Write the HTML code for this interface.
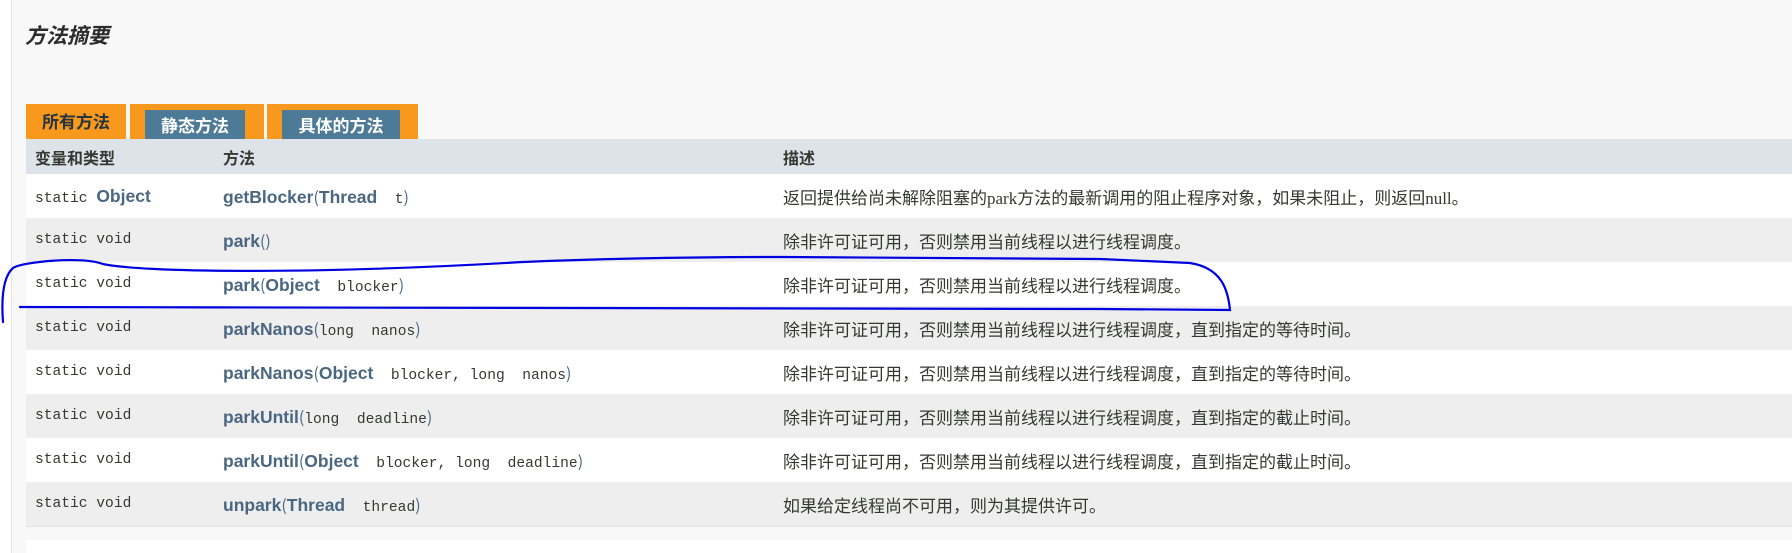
<!DOCTYPE html>
<html><head><meta charset="utf-8"><style>
body{margin:0;width:1792px;height:553px;background:#fff;overflow:hidden;position:relative;font-family:"Liberation Sans","Noto Sans CJK SC",sans-serif}
#pg{position:absolute;left:11px;top:0;width:1781px;height:553px;background:#f8f8f8;border-left:1px solid #e4e4e4}
h3{position:absolute;left:25px;top:20px;margin:0;font-size:21px;font-style:italic;font-weight:bold;color:#2c2c2c}
.tab{position:absolute;top:104px;height:35px;background:#f8981d}
.in{position:absolute;top:6px;height:29px;background:#4d7a97;color:#fff;font-weight:bold;font-size:17px;text-align:center;line-height:34px;overflow:hidden}
table{position:absolute;left:26px;top:139px;width:1766px;border-collapse:collapse}
td,th{padding:0;height:44px;vertical-align:middle;text-align:left}
th{height:35px;background:#dee3e9;font-size:16px;font-weight:bold;color:#353833}
tr td{background:#fff}
tr:nth-child(odd) td{background:#eeeeee}
.c1{padding-left:9px;width:188px;font-family:"Liberation Mono",monospace;font-size:14.6px;color:#353833}
.c2{width:560px}
.m{font-family:"Liberation Sans","Noto Sans CJK SC",sans-serif;font-weight:bold;font-size:17.5px;color:#4a6782}
.p{font-family:"Noto Sans CJK SC",sans-serif;color:#4a6782;font-size:16px;font-weight:normal}
.a{font-family:"Liberation Mono",monospace;font-size:14.6px;color:#353833;white-space:pre}
.c3{font-family:"Liberation Serif","Noto Sans CJK SC",sans-serif;font-size:17px;color:#353833}
</style></head><body>
<div id="pg"></div>
<h3>方法摘要</h3>
<div class="tab" style="left:26px;width:100px;font-weight:bold;font-size:17px;color:#253441;text-align:center;line-height:38px">所有方法</div>
<div class="tab" style="left:130px;width:134px"><div class="in" style="left:15px;width:100px">静态方法</div></div>
<div class="tab" style="left:267px;width:151px"><div class="in" style="left:15px;width:118px">具体的方法</div></div>
<table>
<tr><th style="padding-left:9px">变量和类型</th><th>方法</th><th>描述</th></tr>
<tr><td class="c1">static <span class="m">Object</span></td><td class="c2"><span class="m">getBlocker</span><span class="p">(</span><span class="m">Thread</span><span class="a">  t</span><span class="p">)</span></td><td class="c3">返回提供给尚未解除阻塞的park方法的最新调用的阻止程序对象，如果未阻止，则返回null。</td></tr>
<tr><td class="c1">static void</td><td class="c2"><span class="m">park</span><span class="p">()</span></td><td class="c3">除非许可证可用，否则禁用当前线程以进行线程调度。</td></tr>
<tr><td class="c1">static void</td><td class="c2"><span class="m">park</span><span class="p">(</span><span class="m">Object</span><span class="a">  blocker</span><span class="p">)</span></td><td class="c3">除非许可证可用，否则禁用当前线程以进行线程调度。</td></tr>
<tr><td class="c1">static void</td><td class="c2"><span class="m">parkNanos</span><span class="p">(</span><span class="a">long  nanos</span><span class="p">)</span></td><td class="c3">除非许可证可用，否则禁用当前线程以进行线程调度，直到指定的等待时间。</td></tr>
<tr><td class="c1">static void</td><td class="c2"><span class="m">parkNanos</span><span class="p">(</span><span class="m">Object</span><span class="a">  blocker, long  nanos</span><span class="p">)</span></td><td class="c3">除非许可证可用，否则禁用当前线程以进行线程调度，直到指定的等待时间。</td></tr>
<tr><td class="c1">static void</td><td class="c2"><span class="m">parkUntil</span><span class="p">(</span><span class="a">long  deadline</span><span class="p">)</span></td><td class="c3">除非许可证可用，否则禁用当前线程以进行线程调度，直到指定的截止时间。</td></tr>
<tr><td class="c1">static void</td><td class="c2"><span class="m">parkUntil</span><span class="p">(</span><span class="m">Object</span><span class="a">  blocker, long  deadline</span><span class="p">)</span></td><td class="c3">除非许可证可用，否则禁用当前线程以进行线程调度，直到指定的截止时间。</td></tr>
<tr><td class="c1">static void</td><td class="c2"><span class="m">unpark</span><span class="p">(</span><span class="m">Thread</span><span class="a">  thread</span><span class="p">)</span></td><td class="c3">如果给定线程尚不可用，则为其提供许可。</td></tr>
</table>
<div style="position:absolute;left:26px;top:526px;width:1766px;height:1px;background:#e2e2e2"></div>
<div style="position:absolute;left:26px;top:540px;width:1766px;height:13px;background:#fff"></div>
<svg style="position:absolute;left:0;top:0" width="1792" height="553"><path d="M3,322 C1,295 4,276 13,268 C22,262 80,256 103,264 C140,272 300,275 523,262 C620,258 700,257 783,257 C900,257 1000,258 1100,259 L1190,263 C1222,268 1228,290 1230,310 L1100,309 C800,307 400,308 20,307" fill="none" stroke="#0000e0" stroke-width="2.2" stroke-linecap="round"/></svg>
</body></html>
